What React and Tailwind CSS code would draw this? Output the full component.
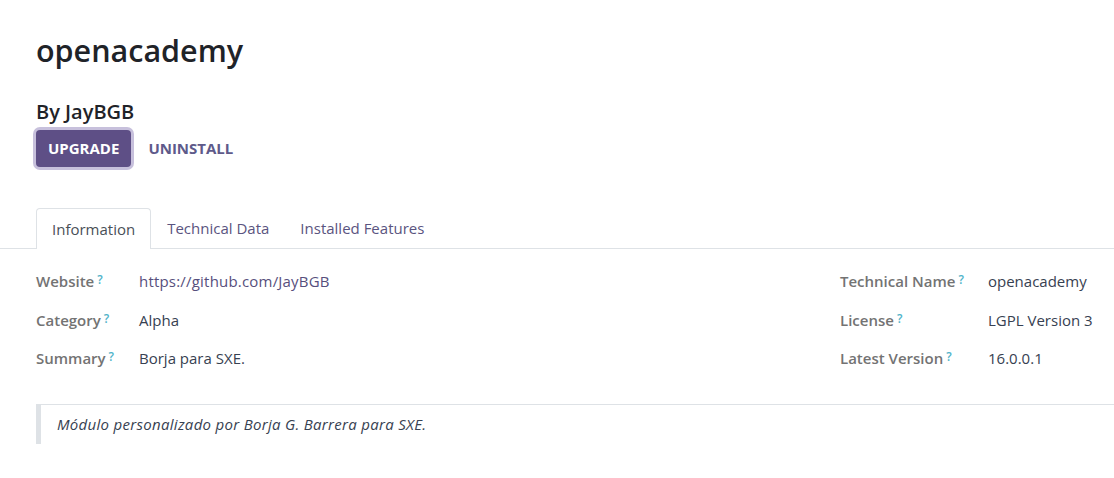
import React from "react";

const Q = () => (
  <sup className="ml-[3px] text-[12px] font-semibold text-[#4fb3c9] relative top-[-3px]">?</sup>
);

function Field({ label, value, labelW, valueClass = "text-[#374151]" }) {
  return (
    <div className="flex items-center h-[38.5px]">
      <div className={`${labelW} shrink-0 font-semibold text-[#737373]`}>
        {label}
        <Q />
      </div>
      <div className={valueClass}>{value}</div>
    </div>
  );
}

export default function App() {
  return (
    <div
      className="w-[1114px] h-[478px] bg-white overflow-hidden text-[15px] text-[#212529]"
      style={{ fontFamily: '"Open Sans", "Noto Sans", sans-serif' }}
    >
      <div className="pl-[36px] pt-[28px]">
        <h1 className="text-[30.5px] font-semibold leading-[44px] text-[#1f2328]">openacademy</h1>
        <div className="mt-[28px] text-[20px] font-semibold leading-[24px] text-[#1f2328]">By JayBGB</div>
        <div className="mt-[6px] flex items-center gap-[13px]">
          <button className="h-[37px] px-[12px] rounded-[4px] bg-[#5e4f86] text-white text-[15px] font-bold ring-[3px] ring-[#c7c0dc]">
            UPGRADE
          </button>
          <button className="h-[37px] px-[4px] text-[15px] font-bold text-[#5e5a8a]">
            UNINSTALL
          </button>
        </div>
      </div>

      <div className="mt-[41px] flex border-b border-[#dee2e6] pl-[36px]">
        <div className="h-[41px] px-[15px] flex items-center border border-b-0 border-[#dee2e6] rounded-t-[4px] bg-white text-[#495057] -mb-px">
          Information
        </div>
        <div className="h-[40px] px-[16px] flex items-center text-[#5a5480]">Technical Data</div>
        <div className="h-[40px] px-[15px] flex items-center text-[#5a5480]">Installed Features</div>
      </div>

      <div className="pl-[36px] pt-[13px] flex">
        <div className="flex-1">
          <Field label="Website" labelW="w-[103px]" value="https://github.com/JayBGB" valueClass="text-[#574f7d] tracking-[0.2px]" />
          <Field label="Category" labelW="w-[103px]" value="Alpha" />
          <Field label="Summary" labelW="w-[103px]" value="Borja para SXE." />
        </div>
        <div className="w-[274px]">
          <Field label="Technical Name" labelW="w-[148px]" value="openacademy" />
          <Field label="License" labelW="w-[148px]" value="LGPL Version 3" />
          <Field label="Latest Version" labelW="w-[148px]" value="16.0.0.1" />
        </div>
      </div>

      <div className="ml-[36px] mt-[26px] border-t border-[#dee2e6]">
        <div className="border-l-[5px] border-[#dee2e6] h-[39px] flex items-center pl-[16px] italic tracking-[0.3px] text-[#374151]">
          Módulo personalizado por Borja G. Barrera para SXE.
        </div>
      </div>
    </div>
  );
}
